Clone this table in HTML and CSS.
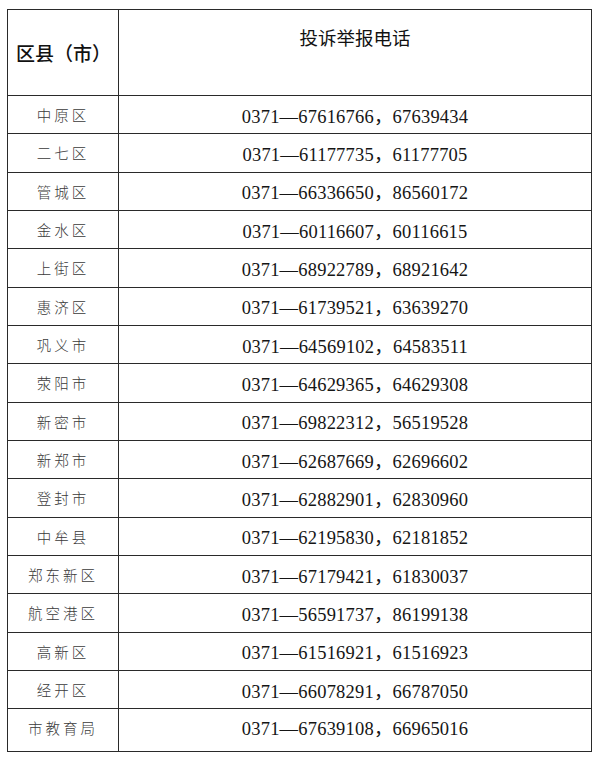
FILE: index.html
```html
<!DOCTYPE html>
<html lang="zh-CN">
<head>
<meta charset="utf-8">
<title>投诉举报电话</title>
<link rel="stylesheet" href="styles.css">
</head>
<body>
<div class="page">
  <table class="phones">
    <colgroup>
      <col class="c-area">
      <col class="c-phone">
    </colgroup>
    <thead>
      <tr class="head-row">
        <th class="col-area">区县（市）</th>
        <th class="col-phone">投诉举报电话</th>
      </tr>
    </thead>
    <tbody>
      <tr><td class="area">中原区</td><td class="phone">0371—67616766，67639434</td></tr>
      <tr><td class="area">二七区</td><td class="phone">0371—61177735，61177705</td></tr>
      <tr><td class="area">管城区</td><td class="phone">0371—66336650，86560172</td></tr>
      <tr><td class="area">金水区</td><td class="phone">0371—60116607，60116615</td></tr>
      <tr><td class="area">上街区</td><td class="phone">0371—68922789，68921642</td></tr>
      <tr><td class="area">惠济区</td><td class="phone">0371—61739521，63639270</td></tr>
      <tr><td class="area">巩义市</td><td class="phone">0371—64569102，64583511</td></tr>
      <tr><td class="area">荥阳市</td><td class="phone">0371—64629365，64629308</td></tr>
      <tr><td class="area">新密市</td><td class="phone">0371—69822312，56519528</td></tr>
      <tr><td class="area">新郑市</td><td class="phone">0371—62687669，62696602</td></tr>
      <tr><td class="area">登封市</td><td class="phone">0371—62882901，62830960</td></tr>
      <tr><td class="area">中牟县</td><td class="phone">0371—62195830，62181852</td></tr>
      <tr><td class="area">郑东新区</td><td class="phone">0371—67179421，61830037</td></tr>
      <tr><td class="area">航空港区</td><td class="phone">0371—56591737，86199138</td></tr>
      <tr><td class="area">高新区</td><td class="phone">0371—61516921，61516923</td></tr>
      <tr><td class="area">经开区</td><td class="phone">0371—66078291，66787050</td></tr>
      <tr class="last-row"><td class="area">市教育局</td><td class="phone">0371—67639108，66965016</td></tr>
    </tbody>
  </table>
</div>
</body>
</html>
```
FILE: styles.css
```css
html, body {
  margin: 0;
  padding: 0;
  background: #ffffff;
}

.page {
  padding: 9px 0 0 7px;
}

.phones {
  border-collapse: collapse;
  width: 585px;
  table-layout: fixed;
  border: 1px solid #222;
}

.c-area {
  width: 111px;
}

.phones th,
.phones td {
  border: 1px solid #2a2a2a;
  padding: 0;
}

.head-row {
  height: 86px;
}

.head-row th {
  font-family: "Noto Sans CJK SC", "Noto Sans", sans-serif;
  color: #111;
}

.head-row .col-area {
  text-align: left;
  padding-left: 8px;
  font-size: 19px;
  font-weight: 500;
  vertical-align: middle;
}

.head-row .col-phone {
  text-align: center;
  font-weight: 400;
  vertical-align: top;
  padding-top: 14px;
  font-size: 18.5px;
}

.phones tbody tr {
  height: 38.33px;
}

.phones tbody tr.last-row {
  height: 43px;
}

.area {
  font-family: "Noto Sans CJK SC", sans-serif;
  font-size: 14.5px;
  font-weight: 300;
  letter-spacing: 3px;
  color: #3a3a3a;
  text-align: center;
  vertical-align: middle;
  padding-left: 3px;
  padding-bottom: 2px;
}

.phone {
  font-family: "Liberation Serif", "Noto Sans CJK SC", serif;
  font-size: 18.5px;
  letter-spacing: 0.2px;
  color: #151515;
  text-align: center;
  vertical-align: middle;
  padding-bottom: 4px;
}

.last-row .area {
  padding-bottom: 5px;
}

.last-row .phone {
  padding-bottom: 7px;
}
```
